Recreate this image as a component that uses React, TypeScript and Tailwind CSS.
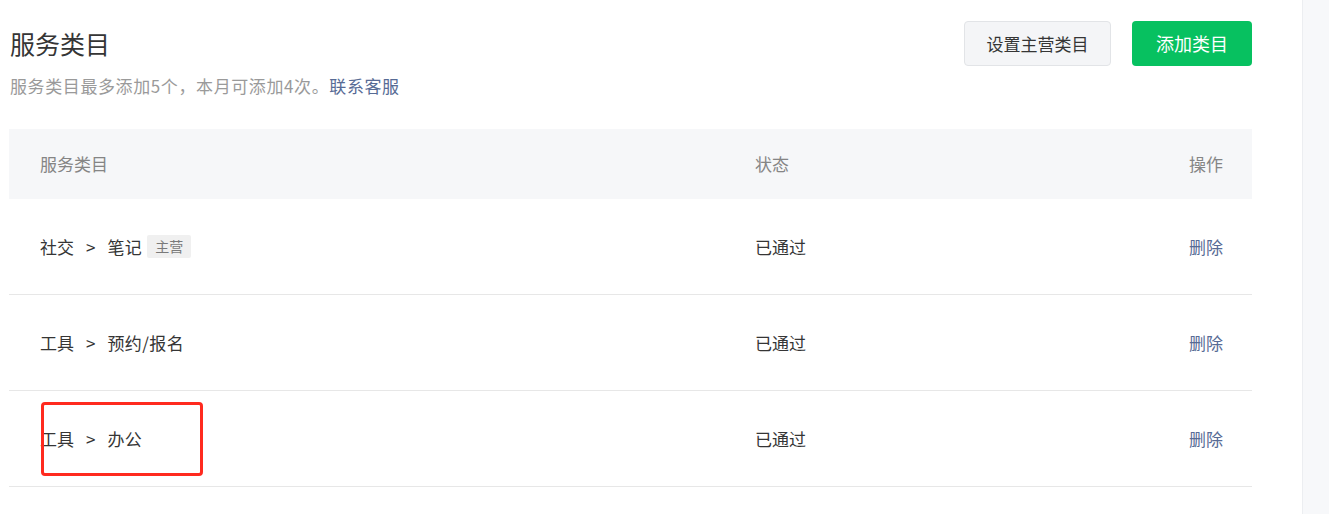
import React from "react";

const rows = [
  { a: "社交", b: "笔记", main: true },
  { a: "工具", b: "预约/报名", main: false },
  { a: "工具", b: "办公", main: false },
];

export default function App() {
  return (
    <div
      className="flex w-[1329px] h-[514px] bg-white overflow-hidden text-[#353535]"
      style={{ fontFamily: '"Noto Sans CJK SC", "Noto Sans", sans-serif' }}
    >
      <div className="w-[1302px] pl-[9px] pr-[50px] pt-[21px] relative">
        <div className="flex justify-between">
          <div className="pl-px">
            <h1 className="text-[25px] leading-[44px] text-[#353535]">服务类目</h1>
            <p className="mt-[9px] text-[17px] leading-[24px] tracking-[0.6px] text-[#9a9a9a]">
              服务类目最多添加5个，本月可添加4次。
              <span className="text-[#576b95]">联系客服</span>
            </p>
          </div>
          <div className="flex gap-[21px]">
            <button className="h-[45px] w-[147px] rounded-[4px] border border-[#e2e4e7] bg-[#f4f5f7] text-[17px] text-[#353535]">
              设置主营类目
            </button>
            <button className="h-[45px] w-[120px] rounded-[4px] bg-[#07c160] text-[18px] text-white">
              添加类目
            </button>
          </div>
        </div>

        <div className="mt-[31px] w-[1243px]">
          <div className="flex h-[70px] items-center bg-[#f6f7f9] pl-[31px] pr-[29px] text-[17px] text-[#858585]">
            <div className="w-[715px]">服务类目</div>
            <div className="flex-1">状态</div>
            <div className="text-right">操作</div>
          </div>
          {rows.map((r, i) => (
            <div
              key={i}
              className="flex h-[96px] items-center border-b border-[#e7e7e7] pl-[31px] pr-[29px] text-[17px]"
            >
              <div className="w-[715px] flex items-center">
                <span>{r.a}</span>
                <span className="mx-[12px]">&gt;</span>
                <span className="tracking-[0.4px]">{r.b}</span>
                {r.main && (
                  <span className="ml-[5px] h-[23px] leading-[23px] rounded-[2px] bg-[#f0f0f0] px-[8px] text-[14px] text-[#7a7a7a]">
                    主营
                  </span>
                )}
              </div>
              <div className="flex-1">已通过</div>
              <div className="text-right text-[#576b95]">删除</div>
            </div>
          ))}
        </div>

        <div className="absolute left-[41px] top-[402px] w-[162px] h-[74px] rounded-[4px] border-[3px] border-[#ff2a1f]" />
      </div>
      <div className="flex-1 bg-[#f7f8fa] border-l border-[#eceef1]" />
    </div>
  );
}
